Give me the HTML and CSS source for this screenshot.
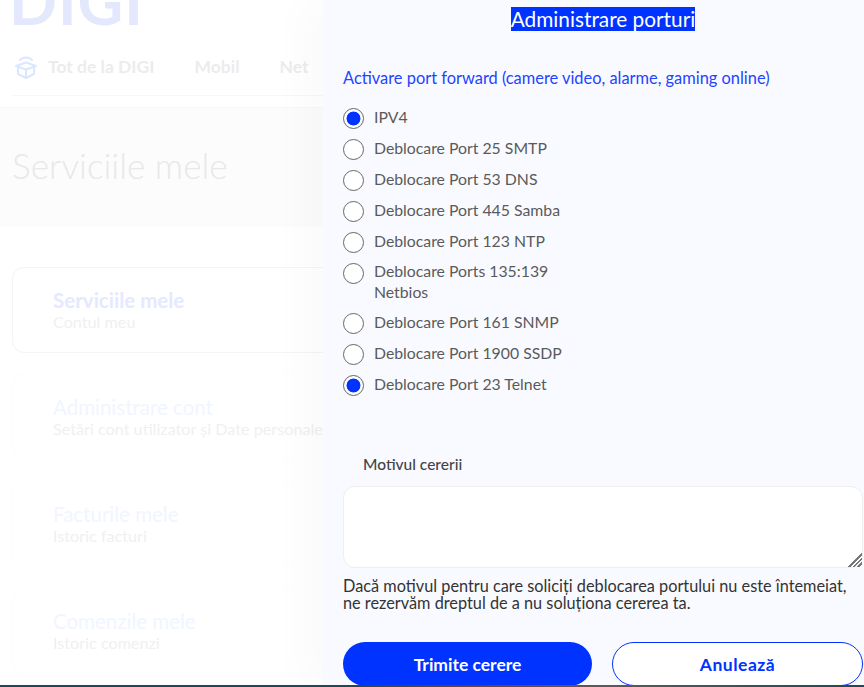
FILE: index.html
```html
<!DOCTYPE html>
<html lang="ro">
<head>
    <meta charset="UTF-8">
    <meta name="viewport" content="width=device-width, initial-scale=1.0">
    <title>Administrare porturi</title>
    <link rel="stylesheet" href="styles.css">
</head>
<body>
    <div class="page">
        <header class="site-header">
            <div class="logo">DIGI</div>
            <nav class="main-nav">
                <a class="nav-link nav-all">
                    <svg class="nav-icon" viewBox="0 0 24 24" fill="none" stroke="#dbe6ff" stroke-width="2" stroke-linejoin="round" stroke-linecap="round">
                        <path d="M6 5 C9 1.5 15 1.5 18 5"/>
                        <path d="M2 11 L12 7.5 L22 11 L12 14.5 Z"/>
                        <path d="M4 12 V19 L12 23 L20 19 V12"/>
                        <path d="M12 14.5 V23"/>
                    </svg>
                    Tot de la DIGI
                </a>
                <a class="nav-link">Mobil</a>
                <a class="nav-link">Net</a>
            </nav>
        </header>

        <section class="hero">
            <h1>Serviciile mele</h1>
        </section>

        <section class="cards">
            <div class="card card-active">
                <h3>Serviciile mele</h3>
                <p>Contul meu</p>
            </div>
            <div class="card">
                <h3>Administrare cont</h3>
                <p>Setări cont utilizator și Date personale</p>
            </div>
            <div class="card">
                <h3>Facturile mele</h3>
                <p>Istoric facturi</p>
            </div>
            <div class="card">
                <h3>Comenzile mele</h3>
                <p>Istoric comenzi</p>
            </div>
        </section>

        <!-- Side panel -->
        <aside class="panel">
            <h2 class="panel-title"><span>Administrare porturi</span></h2>
            <p class="panel-subtitle">Activare port forward (camere video, alarme, gaming online)</p>

            <form class="port-form">
                <div class="port-list">
                    <label class="port-row"><input type="radio" checked><span>IPV4</span></label>
                    <label class="port-row"><input type="radio"><span>Deblocare Port 25 SMTP</span></label>
                    <label class="port-row"><input type="radio"><span>Deblocare Port 53 DNS</span></label>
                    <label class="port-row"><input type="radio"><span>Deblocare Port 445 Samba</span></label>
                    <label class="port-row"><input type="radio"><span>Deblocare Port 123 NTP</span></label>
                    <label class="port-row port-row-wrap"><input type="radio"><span>Deblocare Ports 135:139 Netbios</span></label>
                    <label class="port-row"><input type="radio"><span>Deblocare Port 161 SNMP</span></label>
                    <label class="port-row"><input type="radio"><span>Deblocare Port 1900 SSDP</span></label>
                    <label class="port-row"><input type="radio" checked><span>Deblocare Port 23 Telnet</span></label>
                </div>

                <label class="reason-label" for="reason">Motivul cererii</label>
                <textarea id="reason" class="reason-input"></textarea>
                <p class="reason-note">Dacă motivul pentru care soliciți deblocarea portului nu este întemeiat, ne rezervăm dreptul de a nu soluționa cererea ta.</p>

                <div class="panel-actions">
                    <button type="button" class="btn btn-primary">Trimite cerere</button>
                    <button type="button" class="btn btn-outline">Anulează</button>
                </div>
            </form>
        </aside>

        <div class="bottom-strip"></div>
    </div>
</body>
</html>
```

FILE: styles.css
```css
/* Global Styles */
* {
    box-sizing: border-box;
}

body {
    font-family: 'Lato', 'Open Sans', sans-serif;
    margin: 0;
    padding: 0;
    background: #fff;
}

.page {
    position: relative;
    height: 687px;
    overflow: hidden;
}

/* Header behind the panel */
.logo {
    height: 63px;
    margin-top: -25px;
    margin-left: 9px;
    font-size: 63px;
    font-weight: 700;
    line-height: 52px;
    letter-spacing: 1px;
    color: #e3e8fd;
}

.main-nav {
    display: flex;
    align-items: center;
    gap: 40px;
    height: 58px;
    margin: 0 12px;
    border-bottom: 1px solid #f7f7f8;
}

.nav-link {
    font-size: 17.5px;
    font-weight: 700;
    color: #ececec;
}

.nav-all {
    display: flex;
    align-items: center;
    gap: 10px;
    margin-left: 2px;
}

.nav-icon {
    width: 24px;
    height: 24px;
}

.hero {
    display: flex;
    align-items: center;
    height: 120px;
    margin-top: 11px;
    padding: 0 0 6px 12px;
    background: #fcfcfc;
    border-top: 1px solid #f8f8f8;
}

.hero h1 {
    margin: 0;
    font-size: 35.2px;
    font-weight: 300;
    color: #e8e8e8;
}

.cards {
    display: flex;
    flex-direction: column;
    gap: 21px;
    width: 860px;
    margin-top: 40px;
    padding-left: 12px;
}

.card {
    display: flex;
    flex-direction: column;
    justify-content: center;
    height: 86px;
    padding-left: 40px;
    border: 1px solid #fdfdfd;
    border-radius: 12px;
}

.card-active {
    border-color: #f4f4f6;
}

.card h3 {
    margin: 0;
    font-size: 20.5px;
    font-weight: 400;
    line-height: 22px;
    color: #f1f5ff;
}

.card-active h3 {
    font-weight: 700;
    color: #e5e9ff;
}

.card p {
    margin: 0;
    font-size: 16.2px;
    line-height: 21px;
    color: #f0f0f0;
}

/* Side panel */
.panel {
    position: absolute;
    top: 0;
    right: 0;
    width: 541px;
    height: 687px;
    padding: 7px 1px 0 20px;
    background: #f9faff;
    box-shadow: -20px 0 40px rgba(0, 0, 0, 0.025);
}

.panel-title {
    margin: 0;
    font-size: 20.8px;
    font-weight: 400;
    line-height: 23px;
    text-align: center;
}

.panel-title span {
    display: inline-block;
    padding-bottom: 1px;
    background: #0033ff;
    color: #fff;
}

.panel-subtitle {
    margin: 36px 0 0;
    font-size: 16.4px;
    line-height: 22px;
    color: #2244ff;
}

.port-list {
    margin-top: 19px;
}

.port-row {
    display: flex;
    align-items: flex-start;
    gap: 10px;
    margin-bottom: 10px;
    font-size: 15.8px;
    line-height: 21px;
    color: #5a5a5a;
}

.port-row span {
    max-width: 195px;
    margin-top: -2px;
}

.port-row-wrap {
    height: 40px;
}

.port-row-wrap span {
    margin-top: -3px;
}

.port-row input {
    appearance: none;
    flex: none;
    width: 21px;
    height: 21px;
    margin: 0;
    background: #fff;
    border: 1.5px solid #666;
    border-radius: 50%;
}

.port-row input:checked {
    background: radial-gradient(circle, #0033ff 0, #0033ff 6.6px, #fff 7.3px);
}

.reason-label {
    display: block;
    margin: 57px 0 0 20px;
    font-size: 15.5px;
    font-weight: 500;
    line-height: 22px;
    color: #444;
}

.reason-input {
    display: block;
    width: 520px;
    height: 82px;
    margin-top: 11px;
    background: #fff;
    border: 1px solid #eeeeee;
    border-radius: 12px;
    outline: none;
}

.reason-input::-webkit-resizer {
    background:
        linear-gradient(135deg, #fff 50%, transparent 50%),
        repeating-linear-gradient(135deg, transparent 0, transparent 1.6px, #777 1.6px, #777 3.2px);
}

.reason-note {
    margin: 9px 0 0;
    font-size: 16.3px;
    line-height: 17px;
    color: #333;
}

.panel-actions {
    display: flex;
    gap: 20px;
    margin-top: 31px;
}

.btn {
    flex: 1;
    height: 44px;
    font-family: inherit;
    font-size: 17.5px;
    font-weight: 700;
    border-radius: 22px;
}

.btn-primary {
    background: #0033ff;
    border: none;
    color: #fff;
}

.btn-outline {
    background: #fff;
    border: 1px solid #0033ff;
    color: #0033ff;
    letter-spacing: 0.5px;
}

.bottom-strip {
    position: absolute;
    left: 0;
    right: 0;
    bottom: 0;
    height: 2px;
    background: linear-gradient(90deg, #1d4a55 0, #1d4a55 40%, #6b3f3a 55%, #5b5b5b 70%, #1d4a55 100%);
}
```
